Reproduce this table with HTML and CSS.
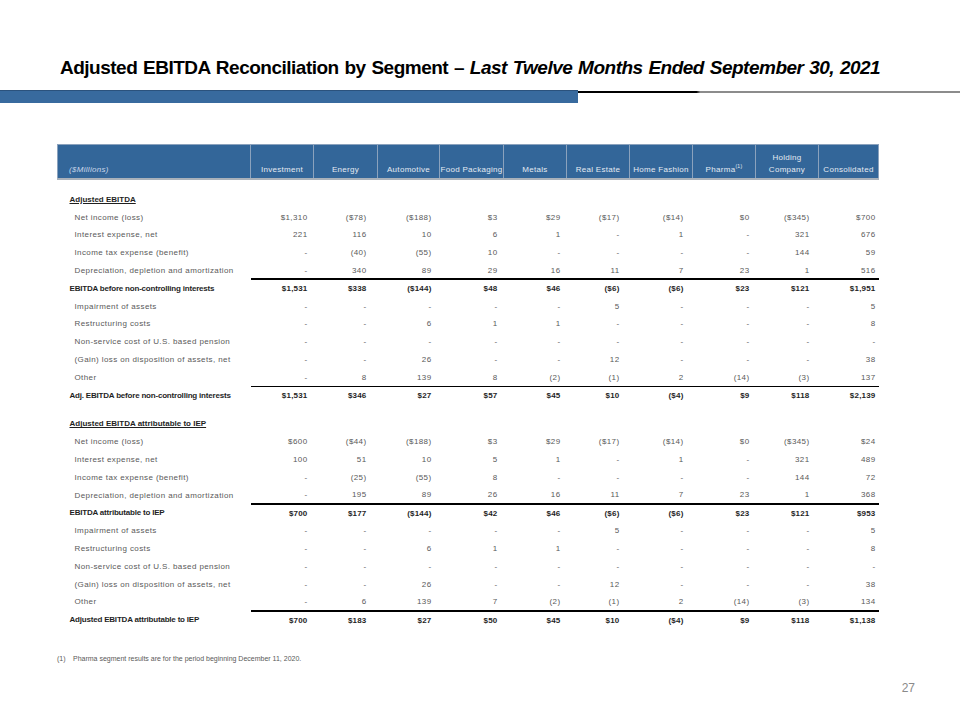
FILE: index.html
```html
<!DOCTYPE html>
<html lang="en">
<head>
<meta charset="utf-8">
<title>Adjusted EBITDA Reconciliation by Segment</title>
<link rel="stylesheet" href="styles.css">
</head>
<body>
<div class="page">
  <h1 class="title">Adjusted EBITDA Reconciliation by Segment – <em>Last Twelve Months Ended September 30, 2021</em></h1>
  <div class="rule"><div class="rule-bar"></div><div class="rule-line"></div></div>

  <table class="recon">
    <colgroup>
      <col class="c-label"><col class="c63"><col class="c64"><col class="c62"><col class="c64"><col class="c63"><col class="c63"><col class="c63"><col class="c63"><col class="c63"><col class="c60">
    </colgroup>
    <thead>
      <tr>
        <th class="h-label">($Millions)</th>
        <th>Investment</th>
        <th>Energy</th>
        <th>Automotive</th>
        <th>Food Packaging</th>
        <th>Metals</th>
        <th>Real Estate</th>
        <th>Home Fashion</th>
        <th>Pharma<sup>(1)</sup></th>
        <th>Holding<br>Company</th>
        <th>Consolidated</th>
      </tr>
    </thead>
    <tbody>
      <tr class="gap-top"><td colspan="11"></td></tr>
      <tr class="sec"><td colspan="11"><span>Adjusted EBITDA</span></td></tr>
      <tr><td>Net income (loss)</td><td>$1,310</td><td>($78)</td><td>($188)</td><td>$3</td><td>$29</td><td>($17)</td><td>($14)</td><td>$0</td><td>($345)</td><td>$700</td></tr>
      <tr><td>Interest expense, net</td><td>221</td><td>116</td><td>10</td><td>6</td><td>1</td><td>-</td><td>1</td><td>-</td><td>321</td><td>676</td></tr>
      <tr><td>Income tax expense (benefit)</td><td>-</td><td>(40)</td><td>(55)</td><td>10</td><td>-</td><td>-</td><td>-</td><td>-</td><td>144</td><td>59</td></tr>
      <tr class="line-thick"><td>Depreciation, depletion and amortization</td><td>-</td><td>340</td><td>89</td><td>29</td><td>16</td><td>11</td><td>7</td><td>23</td><td>1</td><td>516</td></tr>
      <tr class="total"><td>EBITDA before non-controlling interests</td><td>$1,531</td><td>$338</td><td>($144)</td><td>$48</td><td>$46</td><td>($6)</td><td>($6)</td><td>$23</td><td>$121</td><td>$1,951</td></tr>
      <tr><td>Impairment of assets</td><td>-</td><td>-</td><td>-</td><td>-</td><td>-</td><td>5</td><td>-</td><td>-</td><td>-</td><td>5</td></tr>
      <tr><td>Restructuring costs</td><td>-</td><td>-</td><td>6</td><td>1</td><td>1</td><td>-</td><td>-</td><td>-</td><td>-</td><td>8</td></tr>
      <tr><td>Non-service cost of U.S. based pension</td><td>-</td><td>-</td><td>-</td><td>-</td><td>-</td><td>-</td><td>-</td><td>-</td><td>-</td><td>-</td></tr>
      <tr><td>(Gain) loss on disposition of assets, net</td><td>-</td><td>-</td><td>26</td><td>-</td><td>-</td><td>12</td><td>-</td><td>-</td><td>-</td><td>38</td></tr>
      <tr class="line-thin"><td>Other</td><td>-</td><td>8</td><td>139</td><td>8</td><td>(2)</td><td>(1)</td><td>2</td><td>(14)</td><td>(3)</td><td>137</td></tr>
      <tr class="total"><td>Adj. EBITDA before non-controlling interests</td><td>$1,531</td><td>$346</td><td>$27</td><td>$57</td><td>$45</td><td>$10</td><td>($4)</td><td>$9</td><td>$118</td><td>$2,139</td></tr>

      <tr class="gap-mid"><td colspan="11"></td></tr>
      <tr class="sec"><td colspan="11"><span>Adjusted EBITDA attributable to IEP</span></td></tr>
      <tr><td>Net income (loss)</td><td>$600</td><td>($44)</td><td>($188)</td><td>$3</td><td>$29</td><td>($17)</td><td>($14)</td><td>$0</td><td>($345)</td><td>$24</td></tr>
      <tr><td>Interest expense, net</td><td>100</td><td>51</td><td>10</td><td>5</td><td>1</td><td>-</td><td>1</td><td>-</td><td>321</td><td>489</td></tr>
      <tr><td>Income tax expense (benefit)</td><td>-</td><td>(25)</td><td>(55)</td><td>8</td><td>-</td><td>-</td><td>-</td><td>-</td><td>144</td><td>72</td></tr>
      <tr class="line-thick"><td>Depreciation, depletion and amortization</td><td>-</td><td>195</td><td>89</td><td>26</td><td>16</td><td>11</td><td>7</td><td>23</td><td>1</td><td>368</td></tr>
      <tr class="total"><td>EBITDA attributable to IEP</td><td>$700</td><td>$177</td><td>($144)</td><td>$42</td><td>$46</td><td>($6)</td><td>($6)</td><td>$23</td><td>$121</td><td>$953</td></tr>
      <tr><td>Impairment of assets</td><td>-</td><td>-</td><td>-</td><td>-</td><td>-</td><td>5</td><td>-</td><td>-</td><td>-</td><td>5</td></tr>
      <tr><td>Restructuring costs</td><td>-</td><td>-</td><td>6</td><td>1</td><td>1</td><td>-</td><td>-</td><td>-</td><td>-</td><td>8</td></tr>
      <tr><td>Non-service cost of U.S. based pension</td><td>-</td><td>-</td><td>-</td><td>-</td><td>-</td><td>-</td><td>-</td><td>-</td><td>-</td><td>-</td></tr>
      <tr><td>(Gain) loss on disposition of assets, net</td><td>-</td><td>-</td><td>26</td><td>-</td><td>-</td><td>12</td><td>-</td><td>-</td><td>-</td><td>38</td></tr>
      <tr class="line-thick"><td>Other</td><td>-</td><td>6</td><td>139</td><td>7</td><td>(2)</td><td>(1)</td><td>2</td><td>(14)</td><td>(3)</td><td>134</td></tr>
      <tr class="total"><td>Adjusted EBITDA attributable to IEP</td><td>$700</td><td>$183</td><td>$27</td><td>$50</td><td>$45</td><td>$10</td><td>($4)</td><td>$9</td><td>$118</td><td>$1,138</td></tr>
    </tbody>
  </table>

  <p class="footnote"><span class="fn-mark">(1)</span>Pharma segment results are for the period beginning December 11, 2020.</p>

  <div class="page-footer"><span class="page-num">27</span></div>
</div>
</body>
</html>
```

FILE: styles.css
```css
* { box-sizing: border-box; }

html, body {
  margin: 0;
  padding: 0;
  background: #ffffff;
}

.page {
  width: 960px;
  height: 720px;
  display: flex;
  flex-direction: column;
  font-family: "Liberation Sans", Arial, sans-serif;
}

.title {
  margin: 56px 0 0 60px;
  height: 24px;
  font-family: "Liberation Sans", Arial, sans-serif;
  font-size: 19px;
  letter-spacing: -0.5px;
  word-spacing: 1px;
  line-height: 24px;
  font-weight: bold;
  color: #000000;
  white-space: nowrap;
}

.title em {
  font-style: italic;
}

.rule {
  margin-top: 10px;
  display: flex;
  align-items: flex-start;
  height: 13px;
}

.rule-bar {
  width: 578px;
  height: 13px;
  background: #386a9e;
  border-top: 1px solid #2b527d;
}

.rule-line {
  flex: 1;
  height: 2px;
  margin-top: 1px;
  background: linear-gradient(to right, #000000 0%, #000000 31%, #8c8c8c 32%, #8c8c8c 100%);
}

/* table */
.recon {
  margin: 41px 0 0 57px;
  width: 821px;
  border-collapse: collapse;
  table-layout: fixed;
  font-size: 8px;
  color: #595959;
}

.c-label { width: 193px; }
.c60 { width: 60px; }
.c62 { width: 62px; }
.c63 { width: 63px; }
.c64 { width: 64px; }

.recon th {
  background: #336699;
  color: #e4eaf2;
  font-weight: normal;
  font-size: 8px;
  letter-spacing: 0.3px;
  line-height: 12px;
  height: 34px;
  vertical-align: bottom;
  text-align: center;
  padding: 0 0 2px;
  border: 1px solid #8ba2bd;
  border-bottom: 2px solid #a9b1ba;
  white-space: nowrap;
}

.recon th.h-label {
  text-align: left;
  padding-left: 11px;
  font-style: italic;
  color: #c9d7ea;
}

.recon th sup {
  font-size: 5px;
  line-height: 0;
  vertical-align: 4px;
}

.recon td {
  height: 17.8px;
  padding: 0 6px 0 0;
  text-align: right;
  white-space: nowrap;
  letter-spacing: 0.4px;
}

.recon td:first-child {
  text-align: left;
  padding: 0 0 0 17px;
  letter-spacing: 0.4px;
}

.recon td:nth-child(3) { padding-right: 11px; }
.recon td:nth-child(4) { padding-right: 8px; }
.recon td:nth-child(7) { padding-right: 10px; }
.recon td:nth-child(8) { padding-right: 9px; }
.recon td:nth-child(10) { padding-right: 9px; }
.recon td:nth-child(11) { padding-right: 3px; }

.recon tr.gap-top td { height: 12px; padding: 0; }
.recon tr.gap-mid td { height: 11px; padding: 0; }

.recon tr.sec td {
  padding-left: 12px;
  text-align: left;
  font-weight: bold;
  color: #1f1f1f;
  letter-spacing: 0;
}

.recon tr.sec td span {
  text-decoration: underline;
}

.recon tr.total td {
  font-weight: bold;
  color: #1f1f1f;
  letter-spacing: 0.2px;
}

.recon tr.total td:first-child {
  padding-left: 12px;
  letter-spacing: -0.2px;
}

.recon tr.line-thick td:not(:first-child) {
  border-bottom: 2px solid #000000;
}

.recon tr.line-thin td:not(:first-child) {
  border-bottom: 1px solid #000000;
}

.footnote {
  margin: 26px 0 0 57px;
  font-size: 7px;
  color: #595959;
  display: flex;
}

.fn-mark {
  width: 16px;
}

.page-footer {
  margin-top: auto;
  display: flex;
  justify-content: flex-end;
  padding: 0 45px 25px 0;
}

.page-num {
  font-size: 12px;
  color: #8a8a8a;
}
```
